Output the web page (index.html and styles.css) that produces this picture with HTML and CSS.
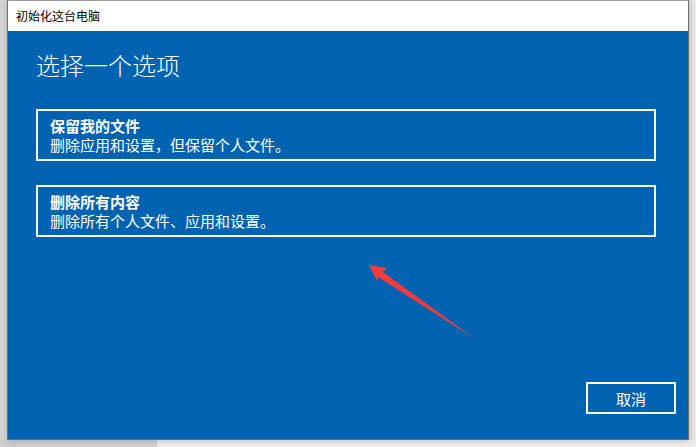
FILE: index.html
```html
<!DOCTYPE html>
<html lang="zh-CN">
<head>
<meta charset="utf-8">
<title>初始化这台电脑</title>
<link rel="stylesheet" href="styles.css">
</head>
<body>
<div class="desktop">
  <div class="window">
    <div class="titlebar">初始化这台电脑</div>
    <div class="content">
      <h1 class="heading">选择一个选项</h1>
      <div class="options">
        <div class="option">
          <div class="option-title">保留我的文件</div>
          <div class="option-desc">删除应用和设置，但保留个人文件。</div>
        </div>
        <div class="option">
          <div class="option-title">删除所有内容</div>
          <div class="option-desc">删除所有个人文件、应用和设置。</div>
        </div>
      </div>
      <div class="footer">
        <button class="btn">取消</button>
      </div>
      <svg class="arrow" width="120" height="90" viewBox="360 258 120 90" xmlns="http://www.w3.org/2000/svg">
        <polygon points="369,265 387,268 383,272 475,339 378,277 377,281" fill="#f23b3b"/>
      </svg>
    </div>
  </div>
</div>
</body>
</html>
```

FILE: styles.css
```css
html, body {
  margin: 0;
  padding: 0;
}
body {
  width: 696px;
  height: 447px;
  overflow: hidden;
  background: linear-gradient(to right, #cfcfcf 157px, #eeeeee 157px);
  font-family: "Noto Sans CJK SC", "Noto Sans", sans-serif;
}
.desktop {
  height: 440px;
  padding-left: 7px;
  background: linear-gradient(to right, #d6d6d6, #dcdcdc 7px, #dcdcdc 682px, #eaeaea);
}
.window {
  width: 680px;
  height: 439px;
  border: 1px solid #707070;
  border-top-color: #9a9a9a;
  border-bottom: 1px solid #6a6a6a;
  box-sizing: content-box;
  height: 438px;
  display: flex;
  flex-direction: column;
  box-shadow: 0 0 7px rgba(0, 0, 0, 0.25);
}
.titlebar {
  height: 30px;
  background: #ffffff;
  font-size: 12px;
  line-height: 30px;
  padding-left: 8px;
  color: #000;
}
.content {
  position: relative;
  flex: 1;
  background: #0063b1;
  color: #ffffff;
  display: flex;
  flex-direction: column;
  padding: 18px 0 25px 28px;
}
.heading {
  margin: 0;
  font-size: 24px;
  font-weight: 300;
  line-height: 32px;
}
.options {
  margin-top: 28px;
  display: flex;
  flex-direction: column;
  gap: 24px;
}
.option {
  width: 620px;
  box-sizing: border-box;
  border: 2px solid #ffffff;
  padding: 5px 12px 5px;
}
.option-title {
  font-size: 15px;
  font-weight: 700;
  line-height: 19px;
}
.option-desc {
  font-size: 15px;
  line-height: 19px;
}
.footer {
  margin-top: auto;
  display: flex;
  justify-content: flex-end;
  padding-right: 12px;
}
.btn {
  width: 90px;
  height: 32px;
  border: 2px solid #ffffff;
  background: transparent;
  color: #ffffff;
  font-family: "Noto Sans CJK SC", "Noto Sans", sans-serif;
  font-size: 15px;
  padding: 0;
}
.arrow {
  position: absolute;
  left: 352px;
  top: 227px;
}
```
